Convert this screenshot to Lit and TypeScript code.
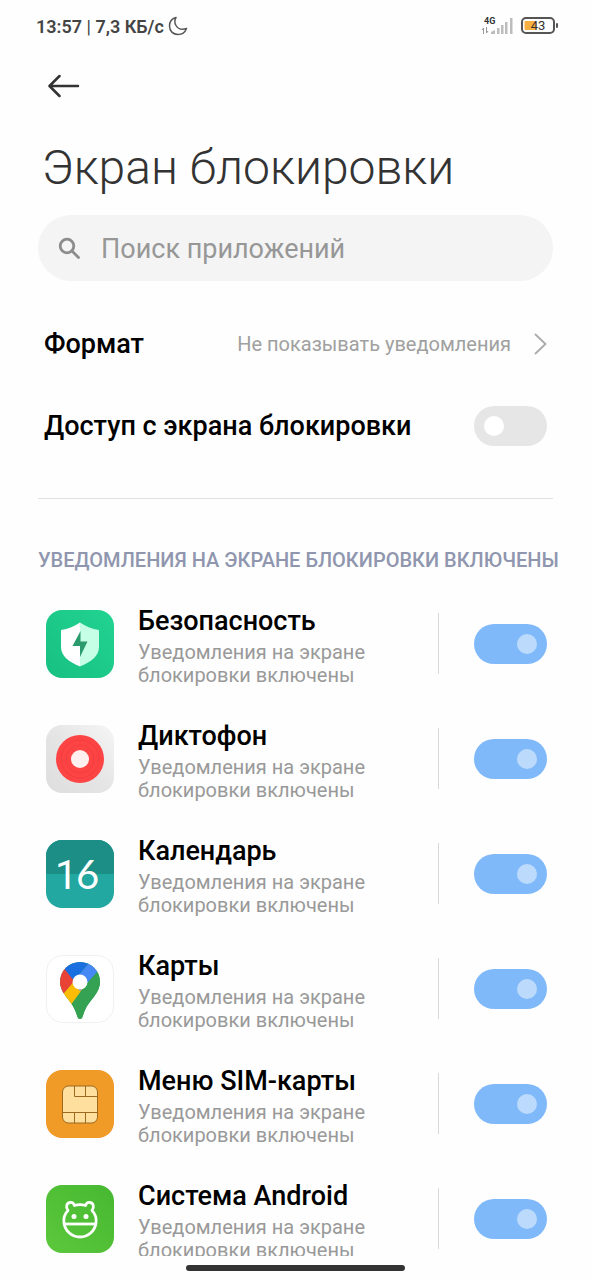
import { LitElement, html, svg, css, TemplateResult } from "lit";
import { customElement, property, state } from "lit/decorators.js";

interface AppEntry {
  id: string;
  name: string;
  icon: TemplateResult;
}

const SUMMARY = "Уведомления на экране блокировки включены";

const securityIcon = svg`
  <defs>
    <linearGradient id="sec" x1="0" y1="1" x2="1" y2="0">
      <stop offset="0" stop-color="#17c081" />
      <stop offset="1" stop-color="#22d392" />
    </linearGradient>
  </defs>
  <rect width="68" height="68" rx="16" fill="url(#sec)" />
  <path d="M34 12.500C29 16 22 19 15 20V37C15 46 23 52 34 56.500Z" fill="#fff" />
  <path d="M34 12.500C39 16 46 19 53 20V37C53 46 45 52 34 56.500Z" fill="#c5ffe6" />
  <path d="M34.500 21L26.500 36H34V47L41.500 31.500H34.500Z" fill="#2b9a6d" />
`;

const recorderIcon = svg`
  <defs>
    <linearGradient id="rec" x1="0" y1="1" x2="1" y2="0">
      <stop offset="0" stop-color="#dedede" />
      <stop offset="0.500" stop-color="#e5e5e5" />
      <stop offset="1" stop-color="#f6f6f6" />
    </linearGradient>
  </defs>
  <rect width="68" height="68" rx="16" fill="url(#rec)" />
  <circle cx="34" cy="34" r="24" fill="#fd4444" />
  <circle cx="34" cy="34" r="19" fill="none" stroke="#f53d3e" stroke-width="1" />
  <circle cx="34" cy="34" r="14" fill="none" stroke="#f53d3e" stroke-width="1" />
  <circle cx="34" cy="34" r="9" fill="#ffefee" />
`;

const calendarIcon = svg`
  <rect width="68" height="68" rx="16" fill="#22a8a0" />
  <path d="M0 34V16A16 16 0 0 1 16 0H52A16 16 0 0 1 68 16V34Z" fill="#1d8e86" />
  <text class="day" y="49"><tspan class="one" x="9">1</tspan><tspan x="30">6</tspan></text>
`;

const mapsIcon = svg`
  <defs>
    <clipPath id="pin">
      <path d="M34 64C32 64 31.500 62 30.500 59C28 51 24 47 19.500 41C16 36 14 32 14 27A20 20 0 0 1 54 27C54 32 52 36 48.500 41C44 47 40 51 37.500 59C36.500 62 36 64 34 64Z" />
    </clipPath>
  </defs>
  <rect x="0.500" y="0.500" width="67" height="67" rx="16" fill="#fff" stroke="#f0f0f0" />
  <g clip-path="url(#pin)">
    <rect width="68" height="68" fill="#34a153" />
    <path d="M8 50L31 22L40 29L22 54Z" fill="#fbbc05" />
    <path d="M0 8H18L31 23L17.500 38.500L0 46Z" fill="#e84335" />
    <path d="M18.500 14L10 0H44L43 8L28 26Z" fill="#1a6fe0" />
    <path d="M43 8L46 0L68 10L52 16L34 36L27 27Z" fill="#4789f4" />
    <path d="M53 15L25 50L34 70L66 40Z" fill="#34a153" />
  </g>
  <circle cx="34" cy="27" r="7.500" fill="#fff" />
`;

const simIcon = svg`
  <rect width="68" height="68" rx="16" fill="#f09a28" />
  <rect x="16.500" y="16" width="35" height="37" rx="6" fill="#fedf9d" />
  <g fill="none" stroke="#9b6a20" stroke-width="1">
    <rect x="16.500" y="16" width="35" height="37" rx="6" />
    <path d="M28.500 16V26.500H51.500M39.500 16V26.500M16.500 42.500H51.500M28.500 42.500V53M39.500 42.500V53" />
  </g>
`;

const androidIcon = svg`
  <defs>
    <linearGradient id="and" x1="0" y1="1" x2="1" y2="0">
      <stop offset="0" stop-color="#5cc83c" />
      <stop offset="1" stop-color="#46b831" />
    </linearGradient>
  </defs>
  <rect width="68" height="68" rx="16" fill="url(#and)" />
  <g fill="none" stroke="#fff" stroke-width="2.800" stroke-linejoin="round">
    <path d="M22 25.500C19.500 22 20.500 18 24 17.500C27 17.200 28 19 28.500 20.500C32 19.300 36 19.300 39.500 20.500C40 19 41 17.200 44 17.500C47.500 18 48.500 22 46 25.500C49.500 29 50.500 34 50 38C49 46 42 52 34 52C26 52 19 46 18 38C17.500 34 18.500 29 22 25.500Z" />
    <path d="M18 39H50" />
  </g>
  <circle cx="28" cy="31.500" r="2.500" fill="#fff" />
  <circle cx="40" cy="31.500" r="2.500" fill="#fff" />
`;

@customElement("toggle-switch")
export class ToggleSwitch extends LitElement {
  @property() label = "";
  @property({ type: Boolean }) checked = false;

  static styles = css`
    :host {
      display: block;
      flex: none;
      height: 40px;
    }
    .switch {
      appearance: none;
      display: flex;
      align-items: center;
      box-sizing: border-box;
      width: 73px;
      height: 40px;
      margin: 0;
      padding: 0 10px;
      border-radius: 20px;
      background: #e6e6e6;
      cursor: pointer;
    }
    .switch::before {
      content: "";
      width: 20px;
      height: 20px;
      border-radius: 50%;
      background: #fff;
    }
    .switch:checked {
      justify-content: flex-end;
      background: #80b9fa;
    }
    .switch:checked::before {
      background: #bcdbfc;
    }
  `;

  render() {
    return html`<input
      class="switch"
      type="checkbox"
      role="switch"
      aria-label=${this.label}
      .checked=${this.checked}
      @change=${(e: Event) => (this.checked = (e.target as HTMLInputElement).checked)}
    />`;
  }
}

@customElement("app-row")
export class AppRow extends LitElement {
  @property() name = "";
  @property({ attribute: false }) icon?: TemplateResult;

  static styles = css`
    :host {
      display: flex;
      align-items: center;
      height: 115px;
      padding: 0 44px 0 46px;
    }
    .icon {
      flex: none;
      width: 68px;
      height: 68px;
      margin-right: 24px;
    }
    .day {
      fill: #fff;
      font: 400 40px Lato, sans-serif;
    }
    .one {
      font-family: Roboto, sans-serif;
    }
    .text {
      flex: 1;
      min-width: 0;
      padding-top: 2px;
    }
    .name {
      margin: 0 0 2px;
      color: #000;
      font-size: 27px;
      font-weight: 500;
      line-height: 36px;
    }
    .summary {
      max-width: 240px;
      margin: 0;
      color: #999;
      font-size: 20px;
      line-height: 23px;
    }
    .rule {
      flex: none;
      width: 1px;
      height: 61px;
      margin-right: 35px;
      background: #d9d9d9;
    }
  `;

  render() {
    return html`
      <svg class="icon" viewBox="0 0 68 68" aria-hidden="true">${this.icon}</svg>
      <div class="text">
        <h3 class="name">${this.name}</h3>
        <p class="summary">${SUMMARY}</p>
      </div>
      <span class="rule"></span>
      <toggle-switch .label=${this.name} checked></toggle-switch>
    `;
  }
}

@customElement("app-root")
export class AppRoot extends LitElement {
  @state() private apps: AppEntry[] = [
    { id: "security", name: "Безопасность", icon: securityIcon },
    { id: "recorder", name: "Диктофон", icon: recorderIcon },
    { id: "calendar", name: "Календарь", icon: calendarIcon },
    { id: "maps", name: "Карты", icon: mapsIcon },
    { id: "sim", name: "Меню SIM-карты", icon: simIcon },
    { id: "android", name: "Система Android", icon: androidIcon },
  ];

  static styles = css`
    :host {
      display: flex;
      flex-direction: column;
      height: 100vh;
      background: #fefefe;
      font-family: Roboto, "Noto Sans", sans-serif;
    }
    .status {
      display: flex;
      align-items: center;
      flex: none;
      height: 52px;
      padding: 0 32px 0 36px;
      color: #444;
      font-size: 18px;
      font-weight: 600;
    }
    .clock {
      flex: 1;
      display: flex;
      align-items: center;
      gap: 4px;
    }
    .bar {
      font-weight: 400;
    }
    .signal {
      margin-right: 8px;
    }
    .net {
      fill: #333;
      font: 700 9px Roboto, sans-serif;
    }
    .level {
      fill: #333;
      font: 400 13px Roboto, sans-serif;
    }
    .content {
      flex: 1;
      min-height: 0;
      overflow: hidden;
    }
    .back {
      display: block;
      margin: 18px 0 0 44px;
      padding: 4px;
      border: 0;
      background: none;
      line-height: 0;
      cursor: pointer;
    }
    .title {
      margin: 36px 44px 17px 42px;
      color: #333;
      font-size: 48px;
      font-weight: 300;
      line-height: 60px;
    }
    .search {
      display: flex;
      align-items: center;
      gap: 20px;
      height: 66px;
      margin: 0 38px;
      padding: 0 20px;
      box-sizing: border-box;
      border-radius: 33px;
      background: #f4f4f4;
    }
    .field {
      flex: 1;
      min-width: 0;
      padding: 2px 0 0;
      border: 0;
      outline: 0;
      background: none;
      color: #333;
      font: 400 27px Roboto, "Noto Sans", sans-serif;
    }
    .field::placeholder {
      color: #979797;
      opacity: 1;
    }
    .setting {
      display: flex;
      align-items: center;
      justify-content: space-between;
      box-sizing: border-box;
      width: 100%;
      height: 82px;
      margin: 0;
      padding: 0 44px;
      border: 0;
      background: none;
      color: #000;
      font: 500 27px Roboto, "Noto Sans", sans-serif;
      text-align: left;
    }
    .settings {
      padding-top: 22px;
      padding-bottom: 31px;
    }
    .value {
      display: flex;
      align-items: center;
      gap: 23px;
      color: #a0a0a0;
      font-size: 20px;
      font-weight: 400;
    }
    .divider {
      height: 1px;
      margin: 0 38px;
      border: 0;
      background: #e2e2e2;
    }
    .section {
      margin: 48px 38px 13px;
      color: #8f96ae;
      font-size: 20px;
      font-weight: 500;
      line-height: 26px;
      white-space: nowrap;
    }
    .nav {
      display: flex;
      flex: none;
      align-items: center;
      justify-content: center;
      height: 24px;
    }
    .handle {
      width: 37%;
      height: 6px;
      border-radius: 3px;
      background: #333;
    }
  `;

  render() {
    return html`
      <header class="status">
        <div class="clock">
          <span>13:57 <span class="bar">|</span> 7,3 КБ/с</span>
          <svg width="20" height="20" viewBox="0 0 20 20" fill="none" stroke="#555" stroke-width="1.500" stroke-linejoin="round" aria-hidden="true">
            <path d="M8 1.500C4 2.500 1.500 6 1.500 10C1.500 15 5 18.500 10 18.500C14 18.500 17 16.500 18.500 12.500C14 14 10 13 8 9.500C6.500 7 6.500 4 8 1.500Z" />
          </svg>
        </div>
        <svg class="signal" width="32" height="20" viewBox="0 0 32 20" aria-hidden="true">
          <text class="net" x="3" y="8">4G</text>
          <g fill="#bdbdbd">
            <path d="M10 18V16L14 14V18Z" />
            <path d="M16 12H18.500V18H16ZM20 9H22.500V18H20ZM24 6H26.500V18H24ZM29 2H31.500V18H29Z" />
          </g>
          <path d="M2.500 18V12L1 14M5.500 11V17L7 15" fill="none" stroke="#999" />
        </svg>
        <svg width="38" height="18" viewBox="0 0 38 18" aria-hidden="true">
          <rect x="1" y="1" width="32" height="15" rx="4" fill="#fff" stroke="#555" stroke-width="2" />
          <rect x="3.500" y="4" width="12" height="9" rx="1" fill="#fab040" />
          <rect x="35" y="6" width="2" height="5" rx="1" fill="#555" />
          <text class="level" x="17" y="13" text-anchor="middle">43</text>
        </svg>
      </header>

      <main class="content">
        <button class="back" aria-label="Назад">
          <svg width="32" height="24" viewBox="0 0 32 24" fill="none" stroke="#333" stroke-width="2.500" stroke-linecap="round" stroke-linejoin="round">
            <path d="M30 12H2M11.500 2L1.500 12L11.500 22" />
          </svg>
        </button>
        <h1 class="title">Экран блокировки</h1>

        <label class="search">
          <svg width="23" height="23" viewBox="0 0 23 23" fill="none" stroke="#8c8c8c" stroke-width="2.800" stroke-linecap="round" aria-hidden="true">
            <circle cx="9" cy="9" r="6.800" />
            <path d="M14 14L20.500 20.500" />
          </svg>
          <input class="field" type="text" placeholder="Поиск приложений" aria-label="Поиск приложений" />
        </label>

        <div class="settings">
          <button class="setting">
            <span>Формат</span>
            <span class="value">
              Не показывать уведомления
              <svg width="13" height="22" viewBox="0 0 13 22" fill="none" stroke="#aaa" stroke-width="1.800" aria-hidden="true">
                <path d="M1 1L11.500 11L1 21" />
              </svg>
            </span>
          </button>
          <div class="setting">
            <span>Доступ с экрана блокировки</span>
            <toggle-switch label="Доступ с экрана блокировки"></toggle-switch>
          </div>
        </div>
        <hr class="divider" />

        <h2 class="section">УВЕДОМЛЕНИЯ НА ЭКРАНЕ БЛОКИРОВКИ ВКЛЮЧЕНЫ</h2>
        ${this.apps.map((app) => html`<app-row .name=${app.name} .icon=${app.icon}></app-row>`)}
      </main>

      <footer class="nav"><span class="handle"></span></footer>
    `;
  }
}
